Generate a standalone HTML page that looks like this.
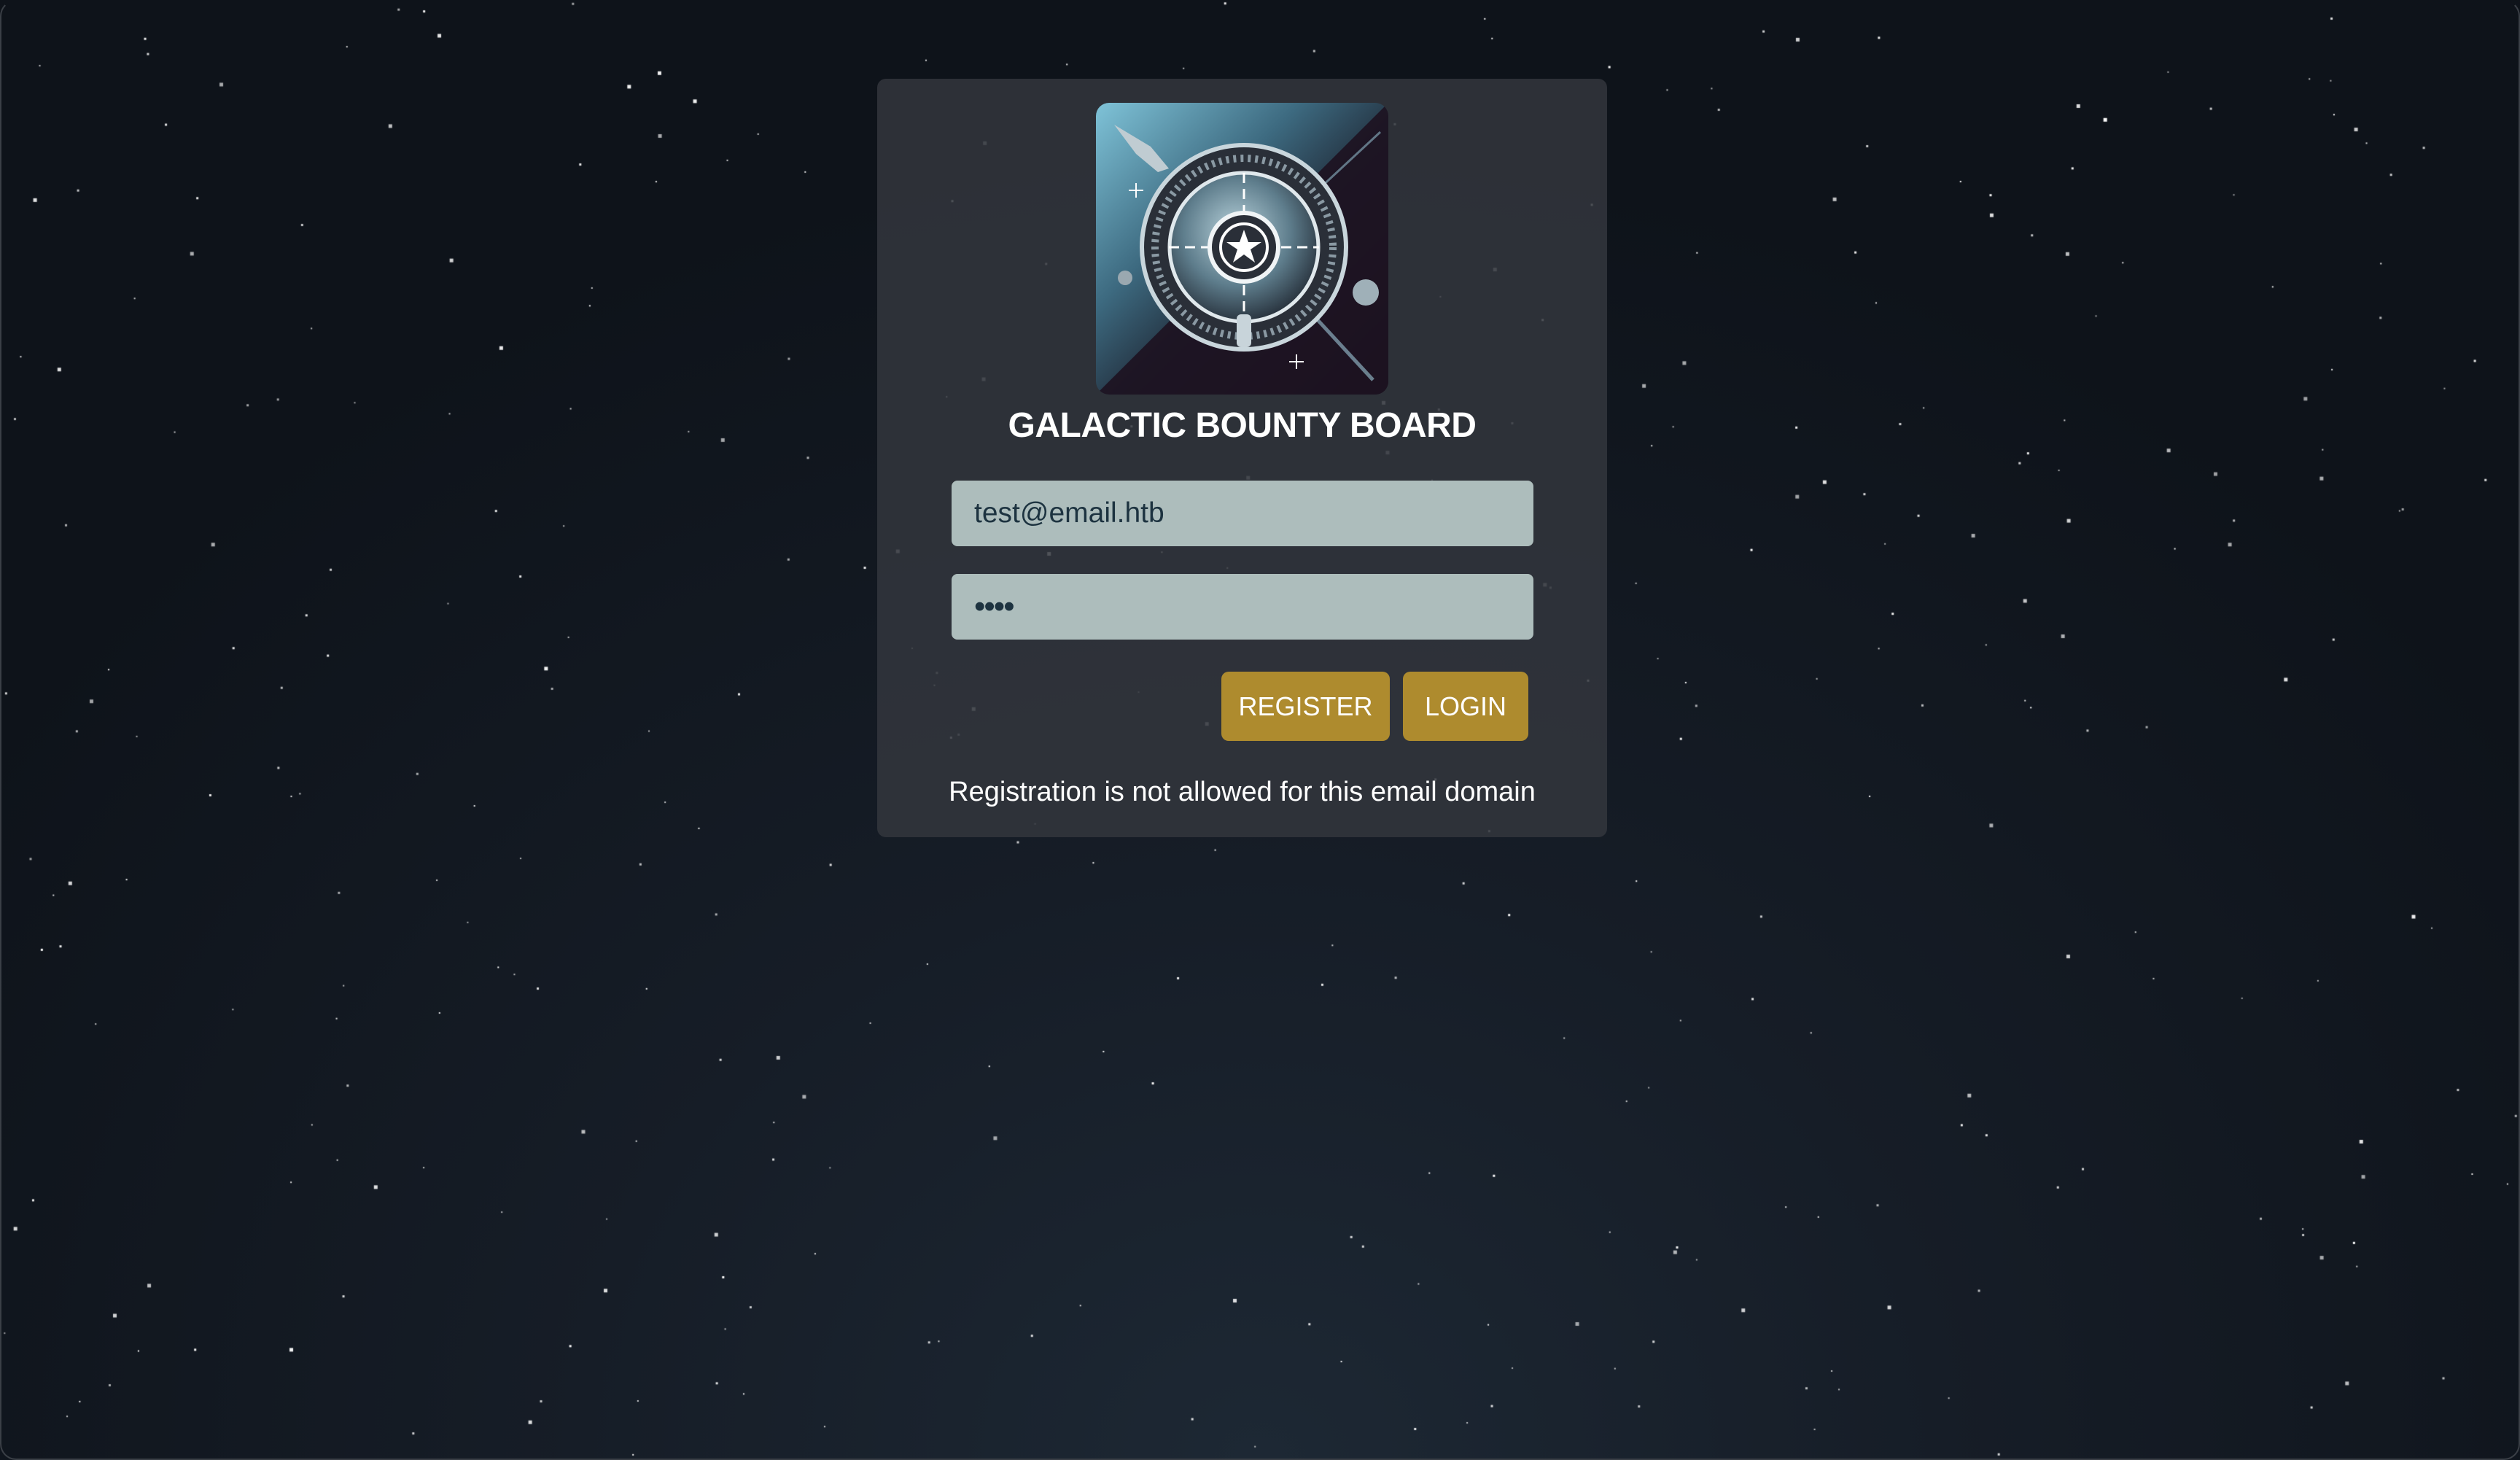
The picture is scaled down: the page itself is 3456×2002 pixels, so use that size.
<!DOCTYPE html>
<html><head><meta charset="utf-8">
<style>
html,body{margin:0;padding:0;width:3456px;height:2002px;overflow:hidden;}
body{background:radial-gradient(ellipse 60% 90% at 50% 100%, #1d2834 0%, #161d27 45%, #0e131a 100%);font-family:"Liberation Sans",sans-serif;position:relative;}
#stars{position:absolute;left:0;top:0;width:3456px;height:2002px;}
.frame{position:absolute;left:0;top:0;width:3452px;height:1998px;border:2px solid #3a3f46;border-radius:22px;pointer-events:none;border-top-color:transparent;}
.card{position:absolute;left:1203px;top:108px;width:1001px;height:1040px;background:rgba(50,54,61,0.85);border-radius:12px;}
.logo{position:absolute;left:300px;top:33px;width:401px;height:400px;border-radius:18px;overflow:hidden;}
.title{position:absolute;left:0;width:1001px;top:446px;text-align:center;color:#fff;font-weight:bold;font-size:48px;letter-spacing:-0.5px;line-height:60px;}
.inp{position:absolute;left:102px;width:798px;height:90px;background:#adbdbc;border-radius:8px;color:#1d3340;font-size:39px;box-sizing:border-box;padding-left:31px;line-height:90px;}
.btn{position:absolute;top:813px;height:95px;background:#ae8b2e;border-radius:10px;color:#fff;font-size:36px;text-align:center;line-height:95px;}
.msg{position:absolute;left:0;width:1001px;top:957px;text-align:center;color:#fff;font-size:38px;}
</style></head><body>
<canvas id="stars" width="3456" height="2002"></canvas>
<div class="card">
 <div class="logo">
  <svg width="401" height="400" viewBox="0 0 401 400">
   <defs>
    <linearGradient id="bg" x1="0" y1="0" x2="1" y2="1">
     <stop offset="0" stop-color="#7fc3d8"/><stop offset="0.35" stop-color="#3d6a80"/><stop offset="0.55" stop-color="#243342"/><stop offset="1" stop-color="#1a1420"/>
    </linearGradient>
    <radialGradient id="disc" cx="0.45" cy="0.4" r="0.6"><stop offset="0" stop-color="#b9d3dc"/><stop offset="0.6" stop-color="#5e7d8c"/><stop offset="1" stop-color="#2a3540"/></radialGradient>
   </defs>
   <rect width="401" height="400" fill="url(#bg)"/>
   <polygon points="401,0 401,400 0,400" fill="#1d1220" opacity="0.9"/>
   <line x1="250" y1="170" x2="390" y2="40" stroke="#8fb8c8" stroke-width="3" opacity="0.6"/>
   <line x1="260" y1="250" x2="380" y2="380" stroke="#9fc8d8" stroke-width="5" opacity="0.6"/>
   <circle cx="203" cy="198" r="140" fill="#2a2f38" stroke="#c9d6dc" stroke-width="6"/>
   <circle cx="203" cy="198" r="122" fill="none" stroke="#8a99a3" stroke-width="10" stroke-dasharray="4 6"/>
   <circle cx="203" cy="198" r="102" fill="url(#disc)" stroke="#e0e8ec" stroke-width="5"/>
   <line x1="100" y1="198" x2="306" y2="198" stroke="#fff" stroke-width="3" stroke-dasharray="14 8"/>
   <line x1="203" y1="96" x2="203" y2="300" stroke="#fff" stroke-width="3" stroke-dasharray="14 8"/>
   <circle cx="203" cy="198" r="47" fill="#2a2f38" stroke="#f0f4f6" stroke-width="6"/>
   <circle cx="203" cy="198" r="32" fill="none" stroke="#fff" stroke-width="4"/>
   <polygon points="203,174 209,191 227,191 212,201 218,219 203,208 188,219 194,201 179,191 197,191" fill="#fff"/>
   <rect x="193" y="290" width="20" height="45" rx="6" fill="#c8d4da"/>
   <circle cx="40" cy="240" r="10" fill="#9aa8b0"/><circle cx="370" cy="260" r="18" fill="#9fb0b8"/>
   <polygon points="25,30 75,60 100,90 85,95 55,70" fill="#c0ccd2"/>
   <path d="M45 120h20M55 110v20M265 355h20M275 345v20" stroke="#fff" stroke-width="2"/>
  </svg>
 </div>
 <div class="title">GALACTIC BOUNTY BOARD</div>
 <div class="inp" style="top:551px">test@email.htb</div>
 <div class="inp" style="top:679px;font-size:44px;letter-spacing:-2px;">••••</div>
 <div class="btn" style="left:472px;width:231px;">REGISTER</div>
 <div class="btn" style="left:721px;width:172px;">LOGIN</div>
 <div class="msg">Registration is not allowed for this email domain</div>
</div>
<div class="frame"></div>
<script>
var c=document.getElementById('stars').getContext('2d');var s=12345;
function r(){s=(s*1103515245+12345)%2147483648;return s/2147483648;}
c.fillStyle='#fff';
for(var i=0;i<380;i++){var x=r()*3456,y=r()*2002,z=r()<0.25?5:(r()<0.5?3:2);c.globalAlpha=0.6+r()*0.4;c.fillRect(x,y,z,z);}
</script>
</body></html>
